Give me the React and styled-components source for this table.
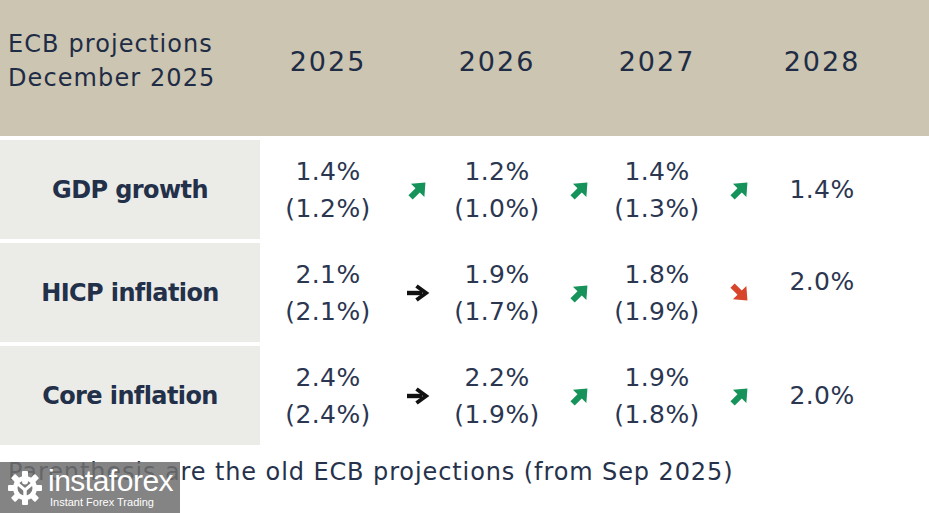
import React from 'react';
import styled, { createGlobalStyle } from 'styled-components';

const rows = [
  {
    label: 'GDP growth',
    cells: [
      { now: '1.4%', old: '(1.2%)' },
      { arrow: 'up' },
      { now: '1.2%', old: '(1.0%)' },
      { arrow: 'up' },
      { now: '1.4%', old: '(1.3%)' },
      { arrow: 'up' },
      { now: '1.4%' },
    ],
  },
  {
    label: 'HICP inflation',
    cells: [
      { now: '2.1%', old: '(2.1%)' },
      { arrow: 'flat' },
      { now: '1.9%', old: '(1.7%)' },
      { arrow: 'up' },
      { now: '1.8%', old: '(1.9%)' },
      { arrow: 'down' },
      { now: '2.0%', top: true },
    ],
  },
  {
    label: 'Core inflation',
    cells: [
      { now: '2.4%', old: '(2.4%)' },
      { arrow: 'flat' },
      { now: '2.2%', old: '(1.9%)' },
      { arrow: 'up' },
      { now: '1.9%', old: '(1.8%)' },
      { arrow: 'up' },
      { now: '2.0%' },
    ],
  },
];

const years = ['2025', '2026', '2027', '2028'];

const App = () => (
  <Page>
    <GlobalStyle />
    <HeaderBand>
      <Title>
        ECB projections
        <br />
        December 2025
      </Title>
      {years.map((y, i) => (
        <Year key={y} style={{ gridColumn: 2 + i * 2 }}>
          {y}
        </Year>
      ))}
    </HeaderBand>

    <Body>
      {rows.map((row) => (
        <Row key={row.label}>
          <Label>{row.label}</Label>
          {row.cells.map((c, i) =>
            c.arrow ? (
              <ArrowCell key={i}>
                <Arrow kind={c.arrow} />
              </ArrowCell>
            ) : (
              <Value key={i} $top={c.top}>
                <span>{c.now}</span>
                {c.old && <span>{c.old}</span>}
              </Value>
            )
          )}
        </Row>
      ))}
    </Body>

    <Note>Parenthesis are the old ECB projections (from Sep 2025)</Note>

    <Watermark>
      <GearLogo />
      <Brand>
        <BrandName>instaforex</BrandName>
        <BrandTag>Instant Forex Trading</BrandTag>
      </Brand>
    </Watermark>
  </Page>
);

const Arrow = ({ kind }) => {
  if (kind === 'flat') {
    return (
      <svg width="24" height="18" viewBox="0 0 24 18">
        <path d="M1 9 H16" stroke="#111" strokeWidth="4.4" />
        <path d="M10.5 2 L20 9 L10.5 16" fill="none" stroke="#111" strokeWidth="4" strokeLinejoin="miter" />
      </svg>
    );
  }
  const color = kind === 'up' ? '#16935a' : '#d8452a';
  const rot = kind === 'up' ? -45 : 45;
  return (
    <svg width="26" height="26" viewBox="0 0 26 26">
      <g transform={`rotate(${rot} 13 13)`}>
        <path d="M2.5 13 H15" stroke={color} strokeWidth="6" />
        <path d="M12.5 3.5 L23.5 13 L12.5 22.5 Z" fill={color} />
      </g>
    </svg>
  );
};

const GearLogo = () => (
  <svg width="36" height="36" viewBox="0 0 36 36">
    <g fill="#fff">
      {Array.from({ length: 8 }).map((_, i) => (
        <rect key={i} x="15" y="1" width="6" height="8" rx="1" transform={`rotate(${i * 45} 18 18)`} />
      ))}
      <circle cx="18" cy="18" r="12" />
    </g>
    <circle cx="18" cy="18" r="7.5" fill="#7b7b7b" />
    <circle cx="18" cy="11.5" r="3" fill="#fff" />
    <path d="M11 14 L18 20 L25 14" stroke="#fff" strokeWidth="3" fill="none" />
    <rect x="16.3" y="18" width="3.4" height="12" fill="#fff" />
  </svg>
);

const GlobalStyle = createGlobalStyle`
  html, body {
    margin: 0;
    padding: 0;
    background: #fff;
  }
  body {
    font-family: "DejaVu Sans", "Liberation Sans", sans-serif;
    color: #26324b;
  }
`;

const cols = '260px 136px 44px 114px 52px 102px 64px 100px 1fr';

const Page = styled.div`
  position: relative;
  width: 929px;
  height: 513px;
  overflow: hidden;
  background: #fff;
`;

const HeaderBand = styled.div`
  display: grid;
  grid-template-columns: ${cols};
  align-items: center;
  height: 136px;
  padding-bottom: 14px;
  box-sizing: border-box;
  background: #cbc5b2;
`;

const Title = styled.div`
  padding-left: 8px;
  font-size: 24px;
  line-height: 34px;
  letter-spacing: 1.1px;
  color: #1f2c45;
  white-space: nowrap;
`;

const Year = styled.div`
  text-align: center;
  font-size: 27px;
  color: #1f2c45;
  letter-spacing: 2px;
`;

const Body = styled.div`
  display: flex;
  flex-direction: column;
  gap: 4px;
  padding-top: 4px;
`;

const Row = styled.div`
  display: grid;
  grid-template-columns: ${cols};
  height: 99px;
`;

const Label = styled.div`
  display: flex;
  align-items: center;
  justify-content: center;
  background: #ebebe7;
  font-size: 24px;
  font-weight: 700;
  color: #233049;
  letter-spacing: -0.6px;
  white-space: nowrap;
`;

const Value = styled.div`
  display: flex;
  flex-direction: column;
  align-items: center;
  justify-content: ${(p) => (p.$top ? 'flex-start' : 'center')};
  padding-top: ${(p) => (p.$top ? '20px' : '0')};
  font-size: 25px;
  line-height: 37px;
  letter-spacing: 0.4px;
  color: #2b3651;
  white-space: nowrap;
`;

const ArrowCell = styled.div`
  display: flex;
  align-items: center;
  justify-content: center;
`;

const Note = styled.div`
  margin-top: 12px;
  padding-left: 8px;
  font-size: 24px;
  line-height: 30px;
  letter-spacing: 0.9px;
  color: #26324b;
  white-space: nowrap;
`;

const Watermark = styled.div`
  position: absolute;
  left: 0;
  bottom: 0;
  width: 180px;
  height: 51px;
  display: flex;
  align-items: center;
  gap: 5px;
  padding-left: 7px;
  box-sizing: border-box;
  background: rgba(110, 110, 110, 0.85);
`;

const Brand = styled.div`
  display: flex;
  flex-direction: column;
  color: #fff;
  font-family: "Liberation Sans", Arial, sans-serif;
`;

const BrandName = styled.span`
  font-size: 30px;
  line-height: 30px;
  letter-spacing: -0.5px;
  font-weight: 400;
`;

const BrandTag = styled.span`
  font-size: 11px;
  line-height: 13px;
  margin-left: 2px;
`;

export default App;
